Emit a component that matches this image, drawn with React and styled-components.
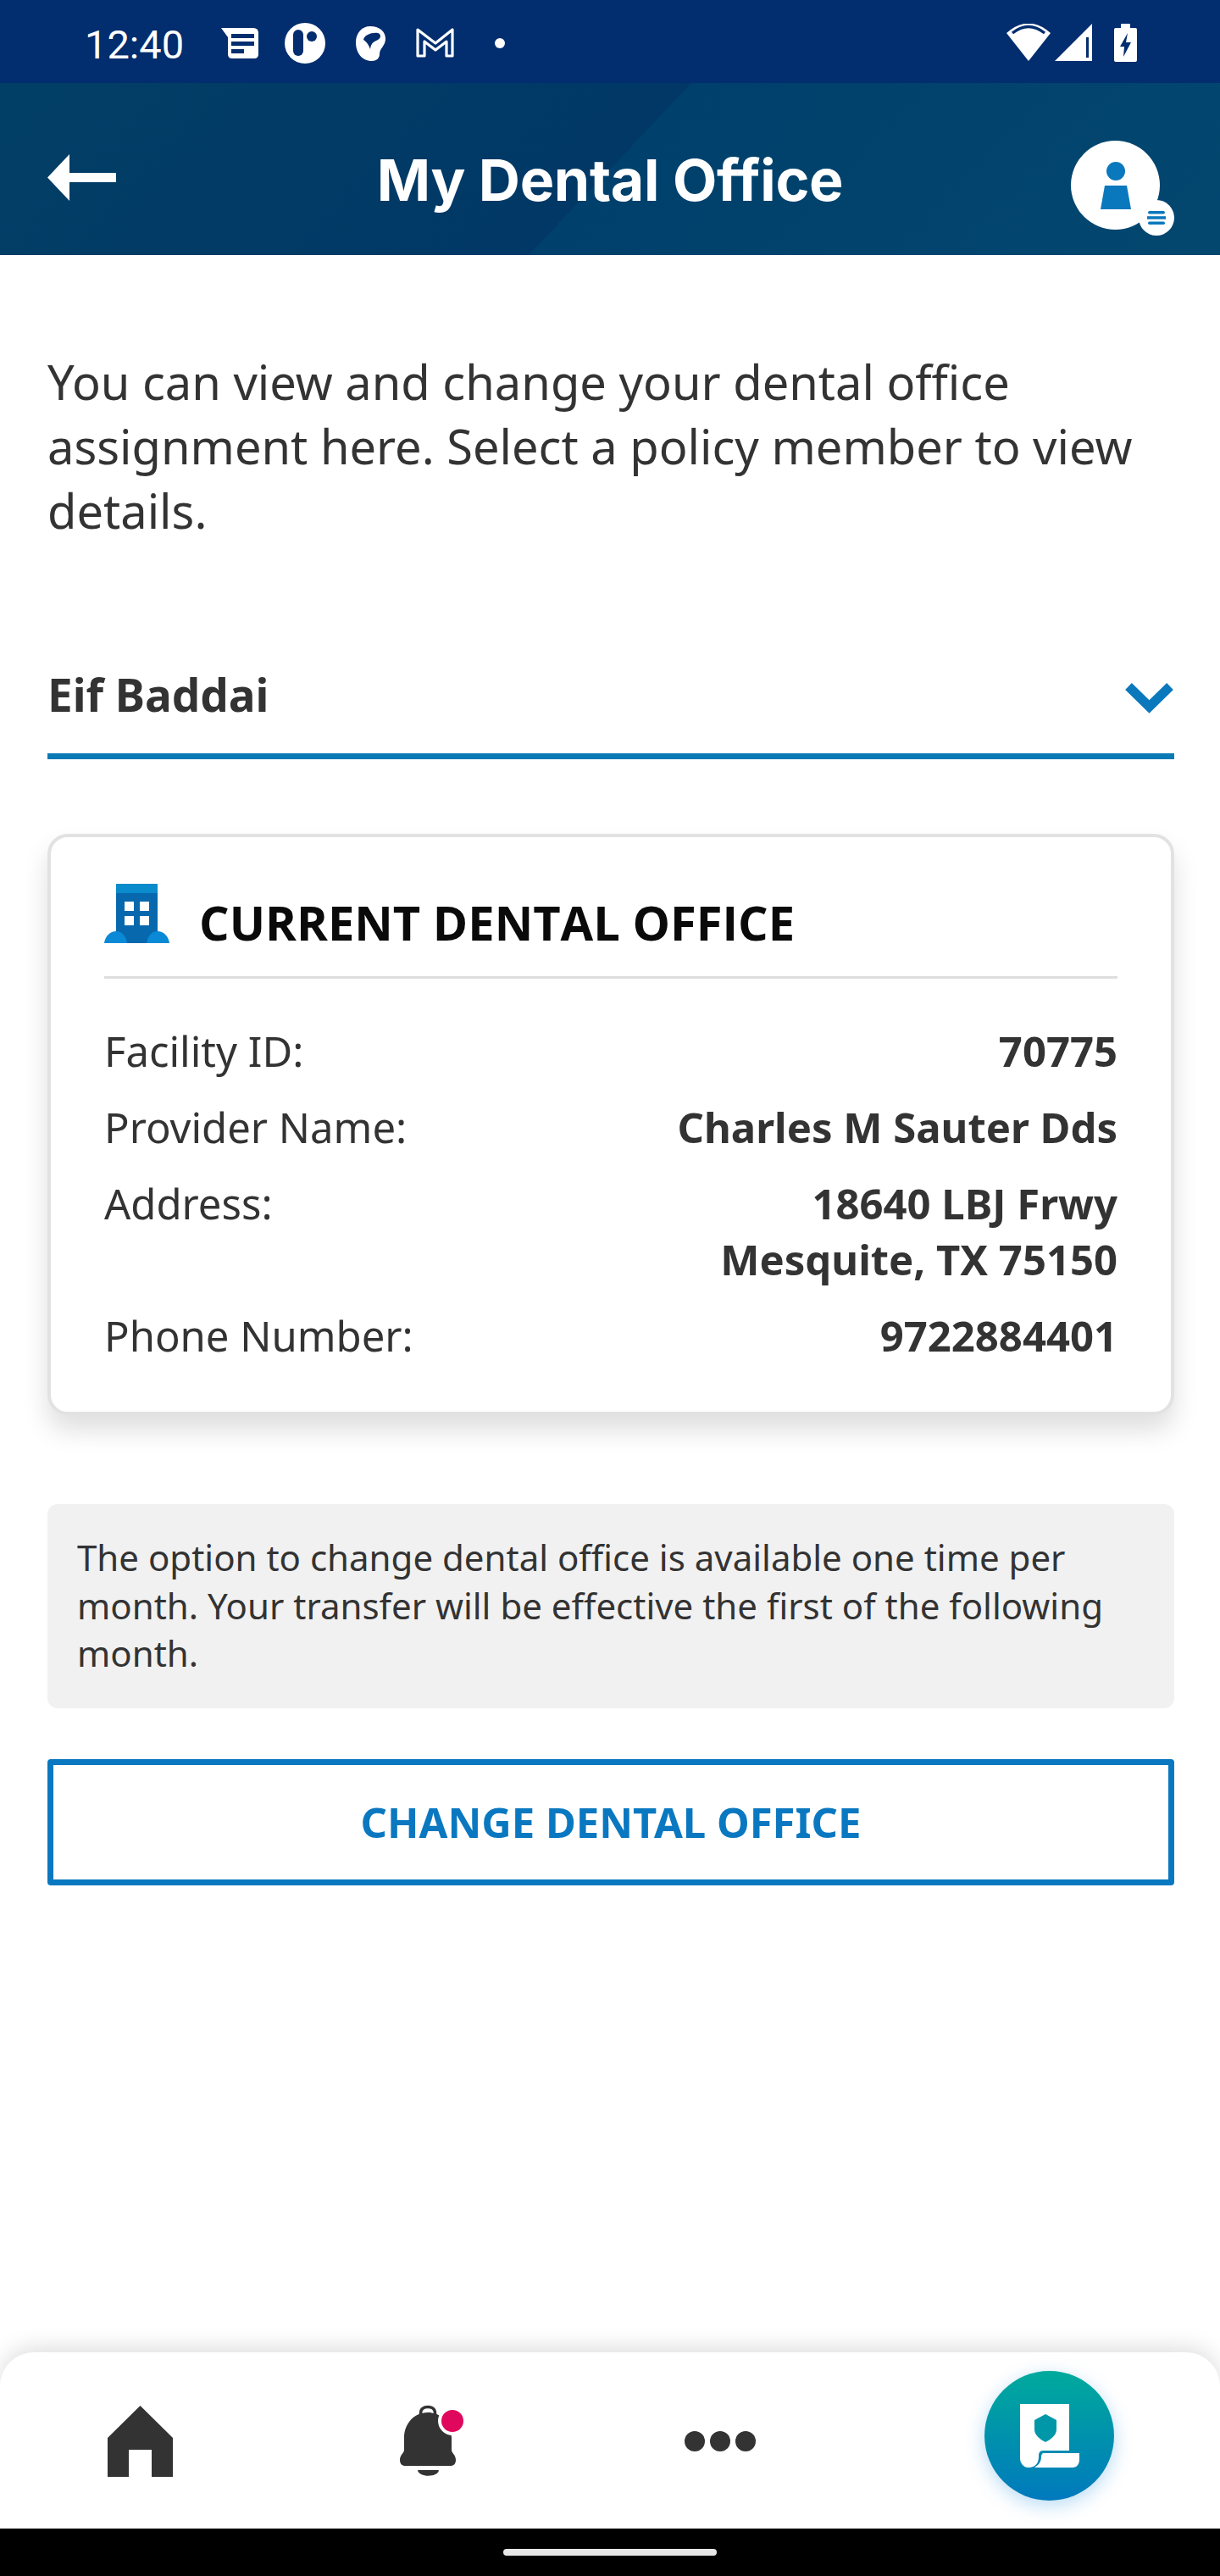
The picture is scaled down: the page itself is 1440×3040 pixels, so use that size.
import React from "react";
import styled, { createGlobalStyle } from "styled-components";

const GlobalStyle = createGlobalStyle`
	html, body {
		margin: 0;
		padding: 0;
		background: #fff;
	}
	* {
		box-sizing: border-box;
	}
`;

const Page = styled.div`
	display: flex;
	flex-direction: column;
	width: 1440px;
	height: 3040px;
	overflow: hidden;
	background: #fff;
	font-family: "Noto Sans", "Open Sans", sans-serif;
	color: #333;
`;

const StatusBar = styled.div`
	display: flex;
	align-items: center;
	justify-content: space-between;
	height: 98px;
	padding: 4px 98px 0 100px;
	background: #022d6e;
`;

const StatusLeft = styled.div`
	display: flex;
	align-items: center;
	gap: 44px;
`;

const Time = styled.span`
	margin-top: 2px;
	font-family: Roboto, sans-serif;
	font-size: 47px;
	color: #fff;
	line-height: 1;
`;

const Header = styled.header`
	display: flex;
	align-items: center;
	justify-content: space-between;
	height: 203px;
	padding: 0 71px 0 56px;
	position: relative;
	background: linear-gradient(133.4deg, #023f66 0%, #013866 50%, #00406c 50%, #03476f 100%);
`;

const BackButton = styled.button`
	display: flex;
	padding: 0;
	border: none;
	background: none;
	margin-top: 19px;
`;

const Title = styled.h1`
	position: absolute;
	left: 0;
	right: 0;
	margin: 24px 0 0;
	text-align: center;
	font-family: Inter, sans-serif;
	font-size: 68px;
	font-weight: 700;
	letter-spacing: -0.3px;
	line-height: 1;
	color: #fff;
`;

const Avatar = styled.div`
	position: relative;
	display: flex;
	align-items: center;
	justify-content: center;
	width: 105px;
	height: 105px;
	margin-top: 38px;
	border-radius: 50%;
	background: #fff;
`;

const AvatarBadge = styled.div`
	position: absolute;
	right: -17px;
	bottom: -7px;
	display: flex;
	align-items: center;
	justify-content: center;
	width: 42px;
	height: 42px;
	border-radius: 50%;
	background: #fff;
`;

const Content = styled.main`
	flex: 1;
	padding: 111px 54px 0 56px;
`;

const Intro = styled.p`
	margin: 0;
	font-size: 56px;
	line-height: 76px;
	color: #333;
`;

const MemberSelect = styled.div`
	display: flex;
	justify-content: space-between;
	height: 116px;
	margin-top: 140px;
	border-bottom: 7px solid #0a7ab5;
`;

const MemberName = styled.span`
	font-size: 53px;
	font-weight: 700;
	line-height: 80px;
	color: #333;
`;

const Chevron = styled.svg`
	margin-top: 25px;
`;

const Card = styled.section`
	margin-top: 88px;
	padding: 55px 63px 57px;
	border: 4px solid #e2e2e2;
	border-radius: 24px;
	background: #fff;
	box-shadow: 0 18px 30px rgba(0, 0, 0, 0.13);
`;

const CardHead = styled.div`
	display: flex;
	align-items: flex-end;
	gap: 35px;
	padding-bottom: 39px;
	border-bottom: 3px solid #dedede;
`;

const CardTitle = styled.h2`
	margin: 0;
	font-family: "Open Sans", sans-serif;
	font-size: 56px;
	font-weight: 700;
	line-height: 50px;
	color: #0a0a0a;
`;

const Rows = styled.div`
	display: flex;
	flex-direction: column;
	gap: 24px;
	margin-top: 52px;
`;

const Row = styled.div`
	display: flex;
	justify-content: space-between;
	font-size: 49px;
	line-height: 66px;
`;

const RowLabel = styled.span`
	color: #333;
`;

const RowValue = styled.span`
	font-weight: 700;
	text-align: right;
	color: #333;
`;

const InfoBox = styled.div`
	margin-top: 105px;
	padding: 35px 35px 36px;
	border-radius: 12px;
	background: #f1f1f1;
	font-size: 42px;
	line-height: 56.5px;
	color: #333;
`;

const ChangeButton = styled.button`
	display: block;
	width: 100%;
	height: 149px;
	margin-top: 60px;
	border: 7px solid #0a78c0;
	border-radius: 4px;
	background: #fff;
	font-family: "Noto Sans", sans-serif;
	font-size: 49px;
	font-weight: 700;
	color: #0a78c0;
`;

const BottomNav = styled.nav`
	display: grid;
	grid-template-columns: 330px 350px 340px 1fr;
	align-items: center;
	height: 208px;
	border-radius: 40px 40px 0 0;
	background: #fff;
	box-shadow: 0 -6px 26px rgba(0, 0, 0, 0.13);
`;

const NavItem = styled.div`
	display: flex;
	justify-content: center;
	margin-top: 2px;
`;

const Dots = styled.div`
	display: flex;
	gap: 6px;
`;

const Dot = styled.span`
	width: 24px;
	height: 24px;
	border-radius: 50%;
	background: #333;
`;

const Fab = styled.div`
	display: flex;
	align-items: center;
	justify-content: center;
	width: 153px;
	height: 153px;
	margin: 0 0 12px 142px;
	border-radius: 50%;
	background: linear-gradient(180deg, #00aa9c 0%, #0079bd 100%);
	box-shadow: 0 6px 22px rgba(0, 130, 220, 0.28);
`;

const GestureBar = styled.div`
	display: flex;
	align-items: center;
	justify-content: center;
	height: 56px;
	background: #000;
`;

const GesturePill = styled.div`
	width: 252px;
	height: 8px;
	border-radius: 4px;
	background: #e6e6e6;
`;

function NotificationIcons() {
	const bg = "#022d6e";
	return (
		<svg width="335" height="48" viewBox="262 27 335 48">
			<path d="M262 33H300Q306 33 306 39V64Q306 69 301 69H275Q270 69 270 64V44Z" fill="#fff" />
			<rect x="274" y="40" width="27" height="5" fill={bg} />
			<rect x="274" y="49" width="27" height="5" fill={bg} />
			<rect x="274" y="58" width="15" height="5" fill={bg} />
			<circle cx="361" cy="51" r="24" fill="#fff" />
			<rect x="347" y="35" width="12" height="31" rx="6" fill={bg} />
			<circle cx="369" cy="43" r="6" fill={bg} />
			<path d="M438 31C450 31 456 38 456 46C456 54 449 57 449 64C449 69 445 72 440 72C428 72 421 62 421 50C421 39 428 31 438 31Z" fill="#fff" />
			<path d="M430 47C431 41 440 38 447 39C451 40 451 45 447 47C443 49 439 50 438 58C436 52 433 49 430 47Z" fill={bg} />
			<path d="M494 35L515 51L535 35V66H528V49L515 59L502 49V66H494Z" fill="none" stroke="#fff" strokeWidth="3.2" strokeLinejoin="round" />
			<circle cx="591" cy="51" r="6" fill="#fff" />
		</svg>
	);
}

function SystemIcons() {
	const bg = "#022d6e";
	return (
		<svg width="154" height="46" viewBox="1188 28 154 46">
			<path d="M1214 72L1188 39Q1214 16 1240 39Z" fill="#fff" />
			<path d="M1195 39Q1214 24 1233 39" fill="none" stroke={bg} strokeWidth="3.5" />
			<path d="M1245 72L1289 28V72Z" fill="#fff" />
			<rect x="1282" y="44" width="3" height="24" fill={bg} />
			<rect x="1323" y="28" width="11" height="6" rx="1" fill="#fff" />
			<rect x="1315" y="33" width="27" height="40" rx="2" fill="#fff" />
			<path d="M1331 39L1322 55H1327L1326 67L1335 50H1329Z" fill={bg} />
		</svg>
	);
}

function BackArrow() {
	return (
		<svg width="81" height="55" viewBox="0 0 81 55">
			<path d="M0 27.5L26 0V22H81V33H26V55Z" fill="#fff" />
		</svg>
	);
}

function PersonIcon() {
	return (
		<svg width="36" height="56" viewBox="0 0 36 56" fill="#0a78bd">
			<circle cx="18" cy="11" r="11" />
			<path d="M5 28H31L36 56H0Z" />
		</svg>
	);
}

function MenuIcon() {
	return (
		<svg width="22" height="16" viewBox="0 0 22 16" fill="#0a78bd">
			<rect x="1" y="0" width="20" height="3.5" rx="1.7" />
			<rect x="0" y="6.2" width="22" height="3.5" />
			<rect x="1" y="12.5" width="20" height="3.5" rx="1.7" />
		</svg>
	);
}

function BuildingIcon() {
	return (
		<svg width="77" height="70" viewBox="0 0 77 70">
			<rect x="14" y="11" width="49" height="59" fill="#0868ae" />
			<rect x="14" y="0" width="49" height="11" fill="#0a8bcc" />
			<rect x="24" y="21" width="11" height="11" fill="#fff" />
			<rect x="42" y="21" width="11" height="11" fill="#fff" />
			<rect x="24" y="38" width="11" height="11" fill="#fff" />
			<rect x="42" y="38" width="11" height="11" fill="#fff" />
			<path d="M0 70C1 62 7 56 14 56C20 56 25 60 27 70Z" fill="#0a8ad6" />
			<path d="M50 70C52 60 57 56 63 56C70 56 76 62 77 70Z" fill="#0a8ad6" />
		</svg>
	);
}

function HomeIcon() {
	return (
		<svg width="77" height="84" viewBox="0 0 77 84">
			<path d="M38.5 0L77 38V84H52V52H25V84H0V38Z" fill="#333" />
		</svg>
	);
}

function BellIcon() {
	return (
		<svg width="66" height="84" viewBox="0 0 66 84" overflow="visible">
			<path d="M33 8C16 8 5 22 5 38V52C5 56 0 58 0 64C0 69 3 71 6 71H60C63 71 66 69 66 64C66 58 61 56 61 52V38C61 22 50 8 33 8Z" fill="#333" />
			<path d="M24.5 11V9C24.5 4 28 1.5 33 1.5C38 1.5 41.5 4 41.5 9V11" fill="none" stroke="#333" strokeWidth="3.5" />
			<path d="M21 76H46C45 85 22 85 21 76Z" fill="#333" />
			<circle cx="62" cy="18" r="17" fill="#fff" />
			<circle cx="62" cy="18" r="13" fill="#e0085c" />
		</svg>
	);
}

function PolicyIcon() {
	return (
		<svg width="70" height="75" viewBox="0 0 70 75">
			<path d="M0 0H58V55H27C23 55 22 58 22 62C22 70 18 75 10 75C4 75 0 70 0 64Z" fill="#fff" />
			<path d="M27 58H70V66C70 71 67 75 62 75H17C22 72 25 68 25 62C25 60 26 59 27 58Z" fill="#fff" />
			<path d="M30 12L43 19V30C43 37 36 42 30 45C24 42 17 37 17 30V19Z" fill="#0098a8" />
		</svg>
	);
}

const rows = [
	{ label: "Facility ID:", value: ["70775"] },
	{ label: "Provider Name:", value: ["Charles M Sauter Dds"] },
	{ label: "Address:", value: ["18640 LBJ Frwy", "Mesquite, TX 75150"] },
	{ label: "Phone Number:", value: ["9722884401"] },
];

export default function App() {
	return (
		<Page>
			<GlobalStyle />
			<StatusBar>
				<StatusLeft>
					<Time>12:40</Time>
					<NotificationIcons />
				</StatusLeft>
				<SystemIcons />
			</StatusBar>
			<Header>
				<BackButton>
					<BackArrow />
				</BackButton>
				<Title>My Dental Office</Title>
				<Avatar>
					<PersonIcon />
					<AvatarBadge>
						<MenuIcon />
					</AvatarBadge>
				</Avatar>
			</Header>
			<Content>
				<Intro>
					You can view and change your dental office assignment here. Select a policy member to view details.
				</Intro>
				<MemberSelect>
					<MemberName>Eif Baddai</MemberName>
					<Chevron width="59" height="38" viewBox="0 0 59 38">
						<path d="M5 5L29.5 29L54 5" fill="none" stroke="#0a78bd" strokeWidth="11" />
					</Chevron>
				</MemberSelect>
				<Card>
					<CardHead>
						<BuildingIcon />
						<CardTitle>CURRENT DENTAL OFFICE</CardTitle>
					</CardHead>
					<Rows>
						{rows.map((row) => (
							<Row key={row.label}>
								<RowLabel>{row.label}</RowLabel>
								<RowValue>
									{row.value.map((line) => (
										<div key={line}>{line}</div>
									))}
								</RowValue>
							</Row>
						))}
					</Rows>
				</Card>
				<InfoBox>
					The option to change dental office is available one time per month. Your transfer will be effective the first of the following month.
				</InfoBox>
				<ChangeButton>CHANGE DENTAL OFFICE</ChangeButton>
			</Content>
			<BottomNav>
				<NavItem>
					<HomeIcon />
				</NavItem>
				<NavItem>
					<BellIcon />
				</NavItem>
				<NavItem>
					<Dots>
						<Dot />
						<Dot />
						<Dot />
					</Dots>
				</NavItem>
				<Fab>
					<PolicyIcon />
				</Fab>
			</BottomNav>
			<GestureBar>
				<GesturePill />
			</GestureBar>
		</Page>
	);
}
